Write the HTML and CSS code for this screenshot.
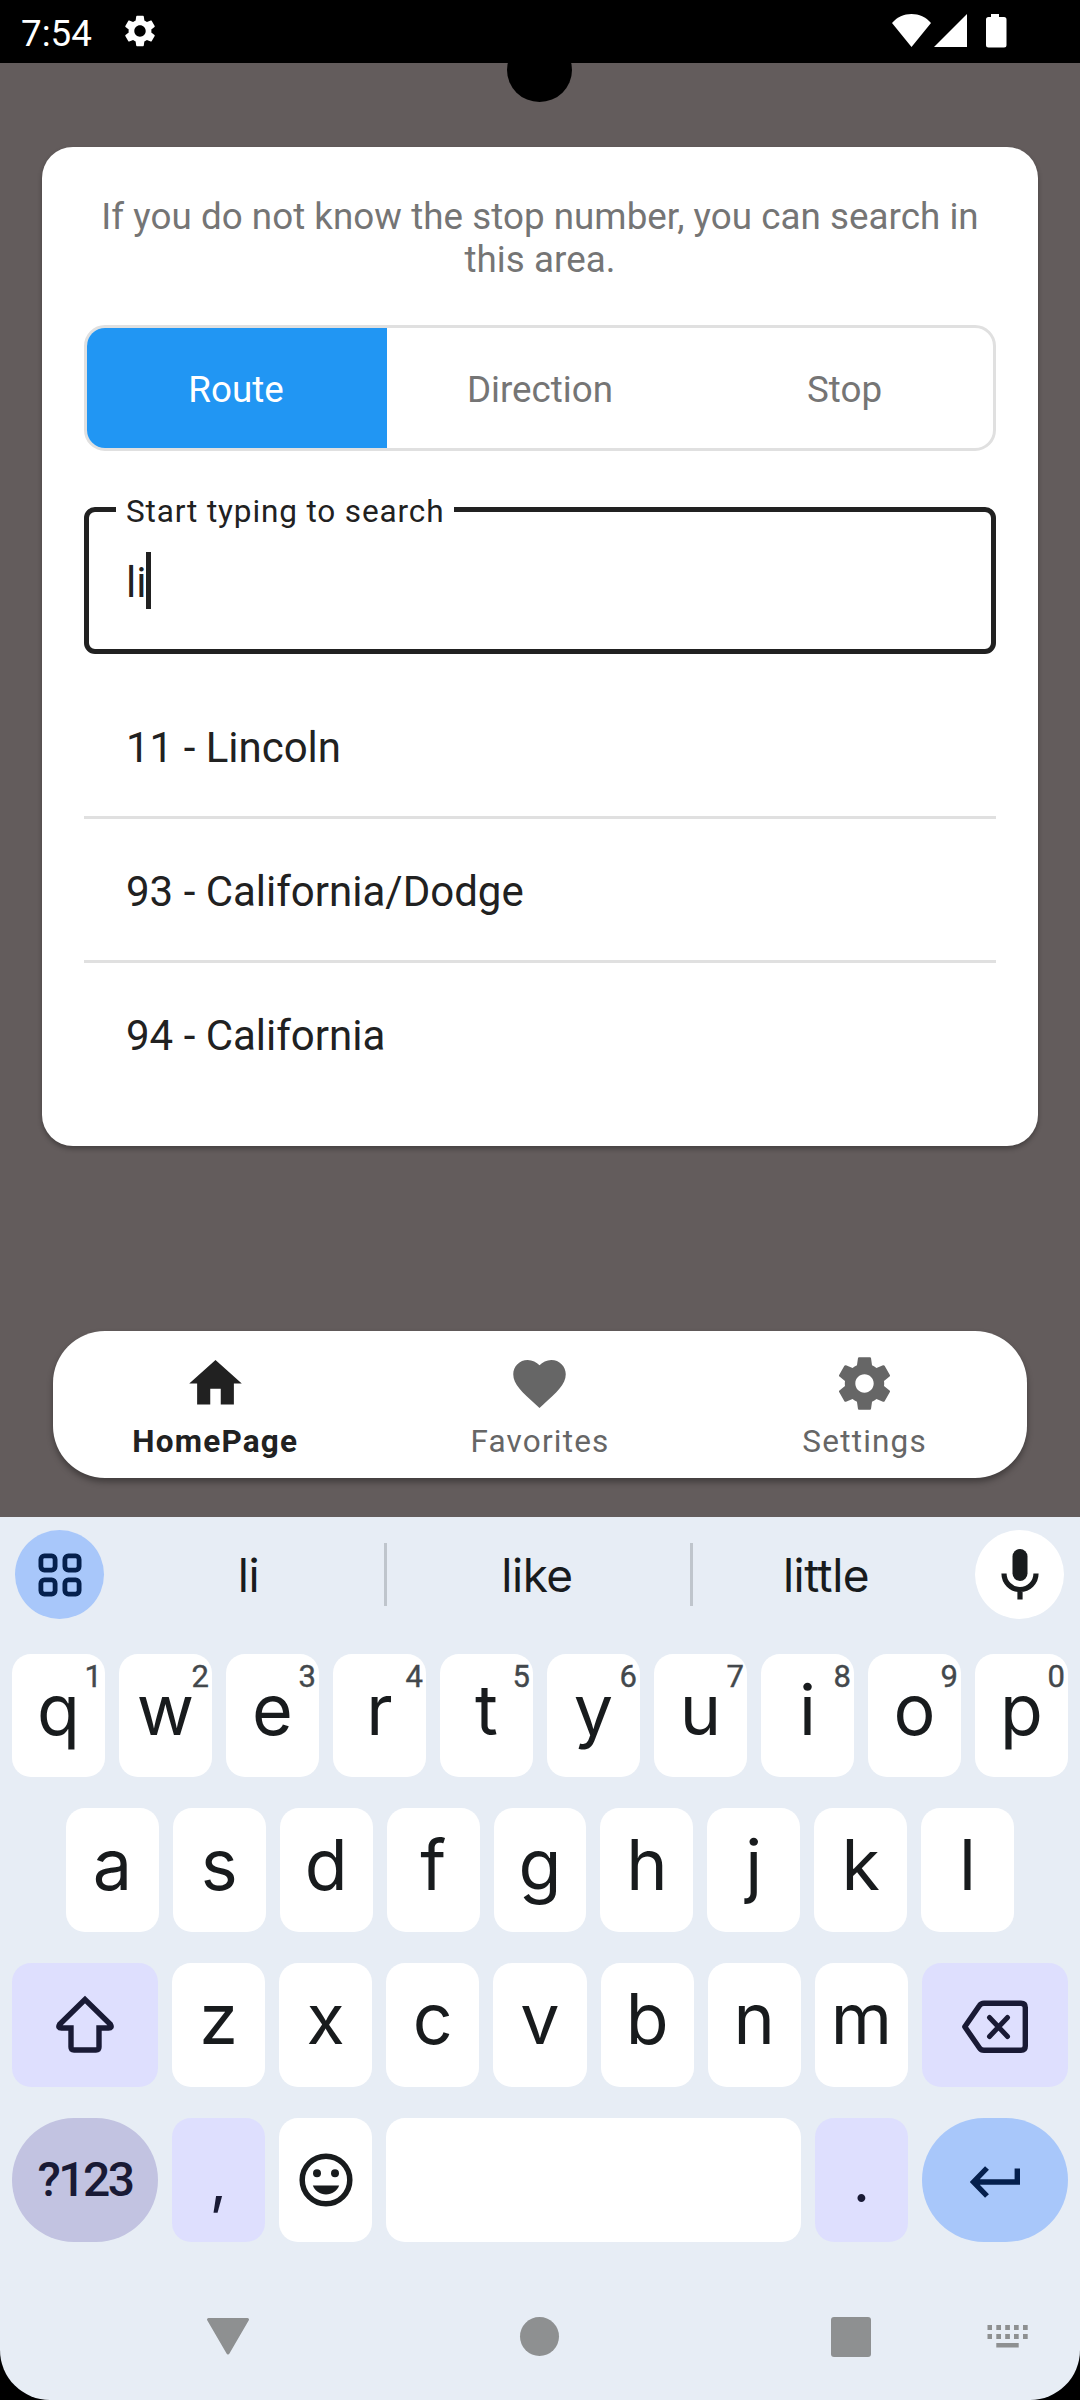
FILE: index.html
```html
<!DOCTYPE html>
<html lang="en">
<head>
<meta charset="utf-8">
<title>Stop search</title>
<link rel="stylesheet" href="styles.css">
</head>
<body>
<div class="phone">
  <header class="status">
    <span class="clock">7:54</span>
    <svg class="status-gear" width="38" height="38" viewBox="0 0 24 24"><path fill="#fff" d="M19.14 12.94c.04-.3.06-.61.06-.94 0-.32-.02-.64-.07-.94l2.03-1.58c.18-.14.23-.41.12-.61l-1.92-3.32c-.12-.22-.37-.29-.59-.22l-2.39.96c-.5-.38-1.03-.7-1.62-.94l-.36-2.54c-.04-.24-.24-.41-.48-.41h-3.84c-.24 0-.43.17-.47.41l-.36 2.54c-.59.24-1.13.57-1.62.94l-2.39-.96c-.22-.08-.47 0-.59.22L2.74 8.87c-.12.21-.08.47.12.61l2.03 1.58c-.05.3-.09.63-.09.94s.02.64.07.94l-2.03 1.58c-.18.14-.23.41-.12.61l1.92 3.32c.12.22.37.29.59.22l2.39-.96c.5.38 1.03.7 1.62.94l.36 2.54c.05.24.24.41.48.41h3.84c.24 0 .44-.17.47-.41l.36-2.54c.59-.24 1.13-.56 1.62-.94l2.39.96c.22.08.47 0 .59-.22l1.92-3.32c.12-.22.07-.47-.12-.61l-2.01-1.58zM12 15.6c-1.98 0-3.6-1.62-3.6-3.6s1.62-3.6 3.6-3.6 3.6 1.62 3.6 3.6-1.62 3.6-3.6 3.6z"/></svg>
    <svg class="status-signals" width="116" height="34" viewBox="0 0 116 34"><g fill="#fff"><path d="M19.500 33L0 9C5 3 12 0 19.500 0S34 3 39 9Z"/><path d="M42 33H75V0Z"/><path d="M99 0h8v3h5a2.500 2.500 0 0 1 2.500 2.500v25.500a2.500 2.500 0 0 1-2.500 2.500H96.500a2.500 2.500 0 0 1-2.500-2.500V5.500A2.500 2.500 0 0 1 96.500 3h2.500z"/></g></svg>
    <span class="cutout"></span>
  </header>

  <main class="app">
    <section class="card">
      <p class="hint">If you do not know the stop number, you can search in<br>this area.</p>
      <div class="tabs">
        <span class="tab tab-active">Route</span>
        <span class="tab">Direction</span>
        <span class="tab">Stop</span>
      </div>
      <div class="field">
        <span class="field-label">Start typing to search</span>
        <span class="field-value">li</span><span class="caret"></span>
      </div>
      <ul class="results">
        <li>11 - Lincoln</li>
        <li>93 - California/Dodge</li>
        <li>94 - California</li>
      </ul>
    </section>

    <nav class="bottom-nav">
      <a class="nav-item nav-active"><svg width="63" height="63" viewBox="0 0 24 24"><path fill="currentColor" d="M10 20v-6h4v6h5v-8h3L12 3 2 12h3v8z"/></svg><span>HomePage</span></a>
      <a class="nav-item"><svg width="63" height="63" viewBox="0 0 24 24"><path fill="currentColor" d="M12 21.350l-1.450-1.320C5.400 15.360 2 12.280 2 8.500 2 5.420 4.420 3 7.500 3c1.740 0 3.410.81 4.500 2.090C13.090 3.810 14.760 3 16.500 3 19.580 3 22 5.420 22 8.500c0 3.780-3.400 6.860-8.550 11.540L12 21.350z"/></svg><span>Favorites</span></a>
      <a class="nav-item"><svg width="63" height="63" viewBox="0 0 24 24"><path fill="currentColor" d="M19.430 12.980c.04-.32.07-.64.07-.98s-.03-.66-.07-.98l2.110-1.650c.19-.15.24-.42.12-.64l-2-3.460c-.12-.22-.39-.3-.61-.22l-2.490 1c-.52-.4-1.080-.73-1.690-.98l-.38-2.650C14.460 2.180 14.250 2 14 2h-4c-.25 0-.46.18-.49.42l-.38 2.650c-.61.25-1.170.59-1.690.98l-2.490-1c-.23-.09-.49 0-.61.22l-2 3.460c-.13.22-.07.49.12.64l2.110 1.650c-.04.32-.07.65-.07.98s.03.66.07.98l-2.110 1.650c-.19.15-.24.42-.12.64l2 3.460c.12.22.39.3.61.22l2.490-1c.52.4 1.080.73 1.690.98l.38 2.650c.03.24.24.42.49.42h4c.25 0 .46-.18.49-.42l.38-2.650c.61-.25 1.170-.59 1.690-.98l2.490 1c.23.09.49 0 .61-.22l2-3.460c.12-.22.07-.49-.12-.64l-2.110-1.650zM12 15.500c-1.930 0-3.500-1.570-3.500-3.500s1.570-3.500 3.500-3.500 3.500 1.570 3.500 3.500-1.570 3.500-3.500 3.500z"/></svg><span>Settings</span></a>
    </nav>
  </main>

  <section class="keyboard">
    <div class="suggestions">
      <span class="round round-blue"><svg width="44" height="44" viewBox="0 0 44 44"><g fill="none" stroke="#05204d" stroke-width="4.800"><rect x="2.900" y="2.900" width="14.200" height="14.200" rx="3.500"/><rect x="26.900" y="2.900" width="14.200" height="14.200" rx="3.500"/><rect x="2.900" y="26.900" width="14.200" height="14.200" rx="3.500"/><rect x="26.900" y="26.900" width="14.200" height="14.200" rx="3.500"/></g></svg></span>
      <div class="words">
        <span class="word word-first">li</span>
        <span class="word word-mid">like</span>
        <span class="word">little</span>
      </div>
      <span class="round round-white"><svg width="38" height="52" viewBox="0 0 38 52"><rect x="11.500" y="0" width="15" height="32" rx="7.500" fill="#181b1d"/><path d="M3 24.500a16 16 0 0 0 32 0M19 40v10.500" fill="none" stroke="#181b1d" stroke-width="5.200"/></svg></span>
    </div>

    <div class="keys">
      <div class="row">
        <span class="key">q<sup>1</sup></span><span class="key">w<sup>2</sup></span><span class="key">e<sup>3</sup></span><span class="key">r<sup>4</sup></span><span class="key">t<sup>5</sup></span><span class="key">y<sup>6</sup></span><span class="key">u<sup>7</sup></span><span class="key">i<sup>8</sup></span><span class="key">o<sup>9</sup></span><span class="key">p<sup>0</sup></span>
      </div>
      <div class="row row-inset">
        <span class="key">a</span><span class="key">s</span><span class="key">d</span><span class="key">f</span><span class="key">g</span><span class="key">h</span><span class="key">j</span><span class="key">k</span><span class="key">l</span>
      </div>
      <div class="row">
        <span class="key key-wide key-tint"><svg width="62" height="60" viewBox="0 0 62 60"><path fill="none" stroke="#191a35" stroke-width="5.400" d="M31 4.500L5.500 29.500Q3.500 33 7.500 33H17V52Q17 55 20 55H42Q45 55 45 52V33H54.500Q58.500 33 56.500 29.500Z"/></svg></span>
        <span class="key">z</span><span class="key">x</span><span class="key">c</span><span class="key">v</span><span class="key">b</span><span class="key">n</span><span class="key">m</span>
        <span class="key key-wide key-tint"><svg class="backspace" width="68" height="54" viewBox="0 0 68 54"><path fill="none" stroke="#191a35" stroke-width="5.400" stroke-linejoin="round" d="M23 3.200H60Q64.300 3.200 64.300 7.500V46Q64.300 50.300 60 50.300H23Q20 50.300 18.500 48L3.800 26.800 18.500 5.500Q20 3.200 23 3.200Z"/><path fill="none" stroke="#191a35" stroke-width="5" stroke-linecap="round" d="M28.500 17.500L46.500 36.500M46.500 17.500L28.500 36.500"/></svg></span>
      </div>
      <div class="row">
        <span class="key key-wide key-pill key-symbols">?123</span>
        <span class="key key-tint key-punct">,</span>
        <span class="key key-icon"><svg width="54" height="54" viewBox="0 0 54 54"><circle cx="27" cy="27" r="23.800" fill="none" stroke="#181b1d" stroke-width="5.500"/><circle cx="18" cy="20.300" r="4" fill="#181b1d"/><circle cx="36" cy="20.300" r="4" fill="#181b1d"/><path d="M13.800 32.500H40.200C38 38 33 41.500 27 41.500S16 38 13.800 32.500Z" fill="#181b1d"/></svg></span>
        <span class="key key-space"></span>
        <span class="key key-tint key-punct">.</span>
        <span class="key key-wide key-pill key-enter"><svg width="50" height="32" viewBox="0 0 50 32"><path fill="none" stroke="#05204d" stroke-width="5.400" d="M17 2L3.500 16 17 30M4 16H47.300V2.500"/></svg></span>
      </div>
    </div>

    <div class="system-nav">
      <svg width="44" height="40" viewBox="0 0 44 40"><path fill="#8e9091" stroke="#8e9091" stroke-width="3" stroke-linejoin="round" d="M2.500 2.500H41.500L22 36Z"/></svg>
      <span class="home-dot"></span>
      <span class="recent-square"></span>
      <svg class="ime" width="42" height="24" viewBox="0 0 42 24"><g fill="#8e9091"><path d="M.5 0h4.500v5H.5zM9.300 0h4.700v5H9.300zM18.200 0h4.700v5h-4.700zM27 0h4.700v5H27zM36 0h4.700v5H36zM.5 9h4.500v5H.5zM9.300 9h4.700v5H9.300zM18.200 9h4.700v5h-4.700zM27 9h4.700v5H27zM36 9h4.700v5H36zM9.300 18h22.400v4.600H9.300z"/></g></svg>
    </div>
  </section>
</div>
</body>
</html>
```
FILE: styles.css
```css
* { box-sizing: border-box; }

body {
  margin: 0;
  background: #000;
  font-family: Roboto, "Liberation Sans", sans-serif;
}

.phone {
  width: 1080px;
  height: 2400px;
  display: flex;
  flex-direction: column;
  overflow: hidden;
  border-radius: 0 0 50px 50px;
}

/* Status bar */
.status {
  position: relative;
  height: 63px;
  flex: none;
  display: flex;
  align-items: flex-start;
  padding: 0 72px 0 21px;
  background: #000;
  color: #fff;
}
.clock { width: 100px; font-size: 36.75px; line-height: 43px; padding-top: 12px; }
.status-gear { margin-top: 12px; }
.status-signals { margin: 14px 0 0 auto; }
.cutout {
  position: absolute;
  left: 507px;
  top: 38px;
  width: 65px;
  height: 64px;
  border-radius: 50%;
  background: #000;
}

/* App content */
.app {
  height: 1454px;
  flex: none;
  display: flex;
  flex-direction: column;
  justify-content: space-between;
  padding: 84px 42px 39px;
  background: #635c5c;
}
.card {
  height: 999px;
  display: flex;
  flex-direction: column;
  padding: 48px 42px 42px;
  border-radius: 31px;
  background: #fff;
  box-shadow: 0 3px 5px rgba(0, 0, 0, .3);
}
.hint {
  margin: 0 -20px;
  height: 130px;
  text-align: center;
  font-size: 36.75px;
  line-height: 43px;
  letter-spacing: .04px;
  color: #757575;
}
.tabs {
  display: grid;
  grid-template-columns: repeat(3, 1fr);
  gap: 3px;
  height: 126px;
  flex: none;
  border: 3px solid #e0e0e0;
  border-radius: 21px;
  overflow: hidden;
}
.tab {
  display: flex;
  align-items: center;
  justify-content: center;
  padding-top: 2px;
  font-size: 36.75px;
  color: #757575;
}
.tab-active { padding-right: 2px; background: #2196f3; color: #fff; }
.tab:last-child { padding-left: 3px; }

.field {
  position: relative;
  height: 147px;
  flex: none;
  display: flex;
  align-items: center;
  margin-top: 56px;
  padding-left: 37px;
  border: 5px solid #212121;
  border-radius: 11px;
  color: #212121;
}
.field-label {
  position: absolute;
  left: 27px;
  top: -19px;
  padding: 0 10px;
  background: #fff;
  font-size: 31.5px;
  line-height: 37px;
  letter-spacing: .87px;
  white-space: nowrap;
}
.field-value { padding-top: 4px; font-size: 42px; line-height: 48px; }
.caret { width: 5px; height: 57px; background: #212121; }

.results { margin: 21px 0 0; padding: 0; list-style: none; }
.results li {
  height: 144px;
  padding: 48px 42px 0;
  border-bottom: 3px solid #e0e0e0;
  font-size: 42px;
  line-height: 49px;
  color: #212121;
}
.results li:last-child { border-bottom: 0; height: 141px; }

.bottom-nav {
  display: grid;
  grid-template-columns: repeat(3, 1fr);
  height: 147px;
  margin: 0 11px;
  border-radius: 52px;
  background: #fff;
  box-shadow: 0 4px 6px rgba(0, 0, 0, .35);
}
.nav-item {
  display: flex;
  flex-direction: column;
  align-items: center;
  padding-top: 21px;
  color: #666;
  font-size: 31.5px;
  line-height: 37px;
  letter-spacing: 1.2px;
}
.nav-item span { margin-top: 8px; }
.nav-active { color: #212121; font-weight: 700; }

/* Keyboard */
.keyboard {
  flex: 1;
  display: flex;
  flex-direction: column;
  background: #e7edf5;
  font-family: Inter, "Liberation Sans", sans-serif;
  color: #181b1d;
}
.suggestions {
  height: 136.5px;
  flex: none;
  display: flex;
  align-items: flex-start;
  padding: 13px 16px 0 15px;
}
.round {
  width: 89px;
  height: 89px;
  flex: none;
  display: flex;
  align-items: center;
  justify-content: center;
  border-radius: 50%;
}
.round-blue { background: #a8c7fa; }
.round-white { background: #fff; }
.words { flex: 1; display: flex; padding: 13px 0 0 9px; }
.word {
  flex: none;
  height: 63px;
  display: flex;
  align-items: center;
  justify-content: center;
  font-size: 46px;
  letter-spacing: -.5px;
}
.word-first { width: 271px; }
.word-mid { width: 309px; padding-right: 3px; border: solid #bfc5cc; border-width: 0 3px; }
.word:last-child { width: 266px; }

.keys { display: flex; flex-direction: column; gap: 31px; padding: 0 12px; }
.row { display: flex; gap: 14px; height: 123.750px; }
.row-inset { padding: 0 54px; }
.key {
  position: relative;
  flex: 1;
  display: flex;
  align-items: center;
  justify-content: center;
  padding-bottom: 11px;
  border-radius: 19px;
  background: #fff;
  font-size: 70px;
  line-height: 80px;
}
.key sup {
  position: absolute;
  top: 5px;
  right: 3px;
  font: 400 31px/35px Roboto, "Liberation Sans", sans-serif;
  color: #43484c;
  -webkit-text-stroke: .4px #43484c;
}
.key-wide { flex: 0 0 146px; padding-bottom: 0; }
.key-tint { background: #dedffe; color: #191a35; }
.key-pill { border-radius: 62px; }
.key-symbols {
  background: #c2c3e1;
  color: #191a35;
  font: 500 48px/56px Roboto, "Liberation Sans", sans-serif;
  letter-spacing: -2.500px;
}
.key-punct { flex: 0 0 93px; padding-bottom: 0; font-size: 60px; }
.key-icon { flex: 0 0 93px; padding-bottom: 0; }
.key-enter { background: #a8c7fa; padding-top: 5px; }
.backspace { margin-top: 4px; }

/* System navigation */
.system-nav {
  display: flex;
  align-items: center;
  margin-top: 73px;
  padding-left: 206px;
  height: 44px;
}
.home-dot { width: 39px; height: 39px; margin-left: 270px; border-radius: 50%; background: #8e9091; }
.recent-square { width: 40px; height: 40px; margin-left: 272px; border-radius: 3px; background: #8e9091; }
.ime { margin-left: 116px; }
```
